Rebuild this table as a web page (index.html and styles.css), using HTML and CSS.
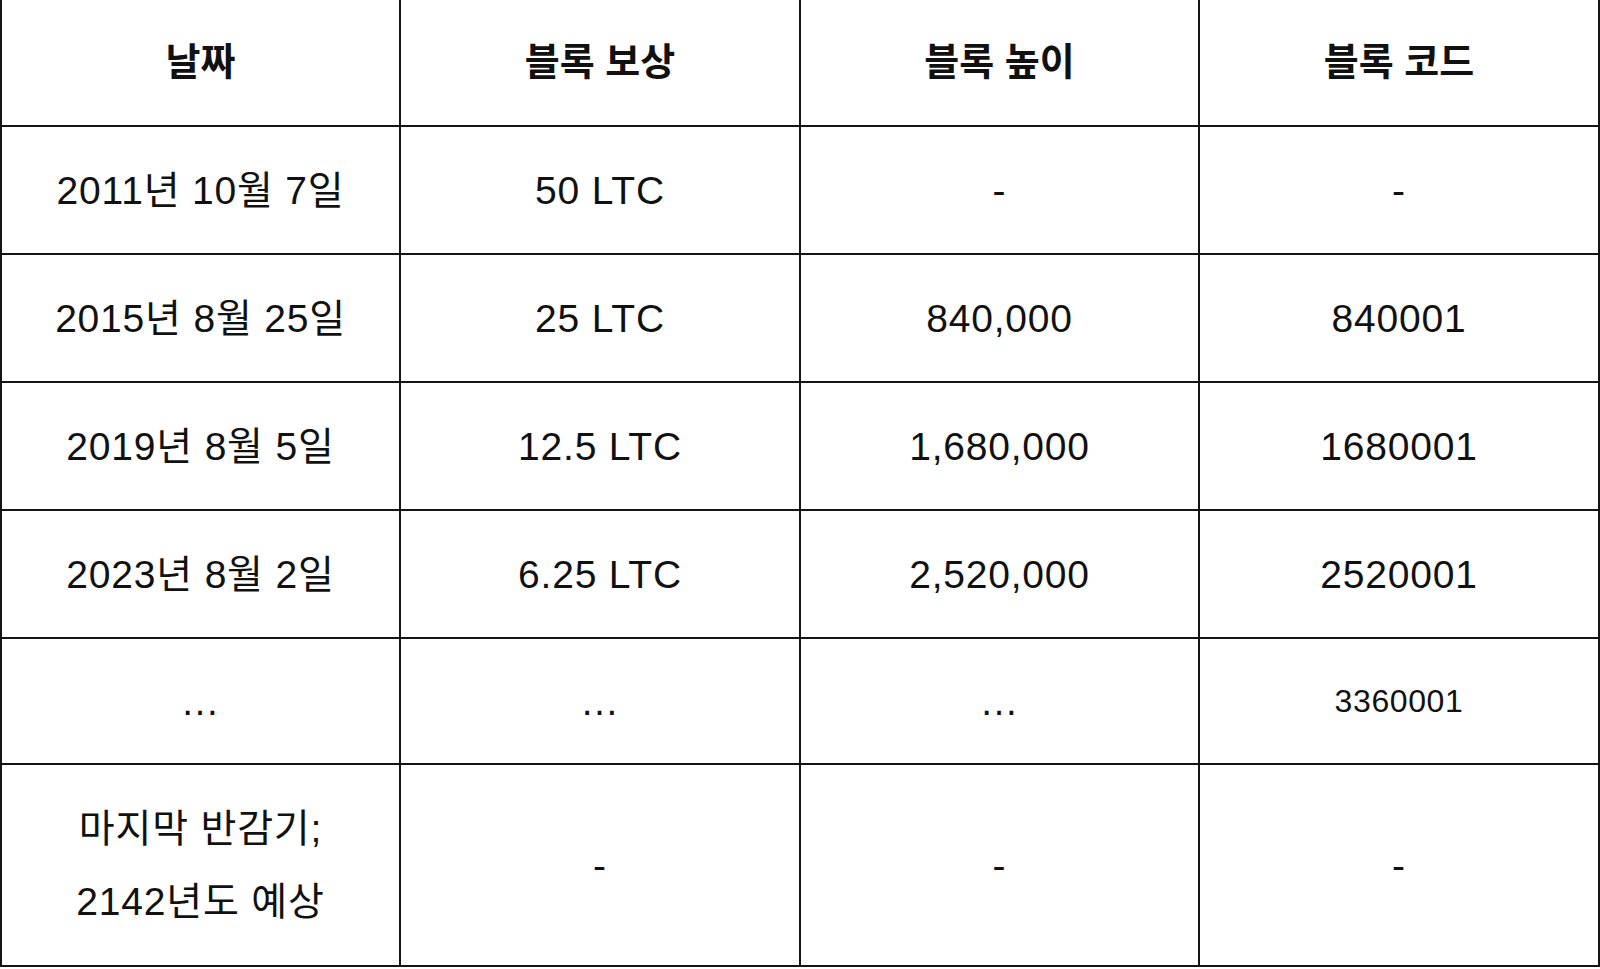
FILE: index.html
```html
<!DOCTYPE html>
<html lang="ko">
<head>
<meta charset="utf-8">
<link rel="stylesheet" href="styles.css">
</head>
<body>
<table class="halving">
  <colgroup>
    <col class="c1"><col class="c2"><col class="c3"><col class="c4">
  </colgroup>
  <thead>
    <tr class="head-row">
      <th>날짜</th>
      <th>블록 보상</th>
      <th>블록 높이</th>
      <th>블록 코드</th>
    </tr>
  </thead>
  <tbody>
    <tr class="row">
      <td>2011년 10월 7일</td>
      <td>50 LTC</td>
      <td>-</td>
      <td>-</td>
    </tr>
    <tr class="row">
      <td>2015년 8월 25일</td>
      <td>25 LTC</td>
      <td>840,000</td>
      <td>840001</td>
    </tr>
    <tr class="row">
      <td>2019년 8월 5일</td>
      <td>12.5 LTC</td>
      <td>1,680,000</td>
      <td>1680001</td>
    </tr>
    <tr class="row">
      <td>2023년 8월 2일</td>
      <td>6.25 LTC</td>
      <td>2,520,000</td>
      <td>2520001</td>
    </tr>
    <tr class="row row-short">
      <td>…</td>
      <td>…</td>
      <td>…</td>
      <td class="small">3360001</td>
    </tr>
    <tr class="row row-last">
      <td class="two-line">마지막 반감기;<br>2142년도 예상</td>
      <td>-</td>
      <td>-</td>
      <td>-</td>
    </tr>
  </tbody>
</table>
</body>
</html>
```

FILE: styles.css
```css
html, body {
  margin: 0;
  padding: 0;
  background: #ffffff;
}

body {
  font-family: "Liberation Sans", "Noto Sans CJK KR", sans-serif;
  color: #111111;
}

.halving {
  border-collapse: collapse;
  table-layout: fixed;
  width: 1598px;
  margin: 0;
}

.c1 { width: 399px; }
.c2 { width: 400px; }
.c3 { width: 399px; }
.c4 { width: 400px; }

.halving th,
.halving td {
  border: 2px solid #151515;
  padding: 0;
  text-align: center;
  vertical-align: middle;
}

.halving th {
  border-top: none;
  font-weight: bold;
  font-size: 38px;
  line-height: 57px;
}

.halving td {
  font-size: 39px;
  line-height: 57px;
  letter-spacing: 0.8px;
}

.halving td.two-line {
  line-height: 73px;
}

.halving td.small {
  font-size: 32px;
  letter-spacing: 0.6px;
}

.head-row { height: 126px; }
.row { height: 128px; }
.row-short { height: 126px; }
.row-last { height: 202px; }
```
